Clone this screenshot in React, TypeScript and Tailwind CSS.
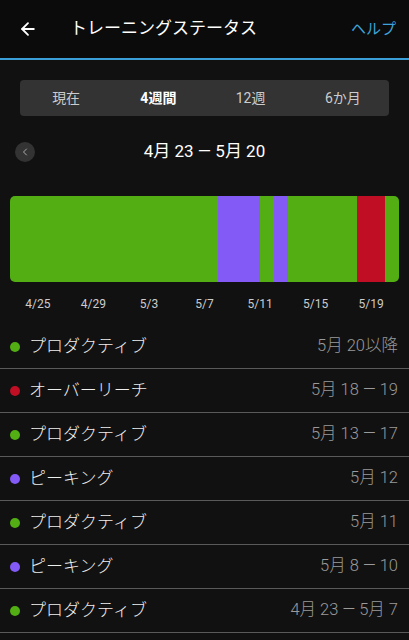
import { ArrowLeft, ChevronLeft } from "lucide-react"

const GREEN = "bg-[#52ae12]"
const PURPLE = "bg-[#845af7]"
const RED = "bg-[#c00f25]"

// one segment per status run, width by number of days
const segments = [
  { days: "flex-[15]", color: GREEN },
  { days: "flex-[3]", color: PURPLE },
  { days: "flex-[1]", color: GREEN },
  { days: "flex-[1]", color: PURPLE },
  { days: "flex-[5]", color: GREEN },
  { days: "flex-[2]", color: RED },
  { days: "flex-[1]", color: GREEN },
]

const ticks = ["4/25", "4/29", "5/3", "5/7", "5/11", "5/15", "5/19"]

const rows = [
  { label: "プロダクティブ", color: GREEN, range: "5月 20以降" },
  { label: "オーバーリーチ", color: RED, range: "5月 18 — 19" },
  { label: "プロダクティブ", color: GREEN, range: "5月 13 — 17" },
  { label: "ピーキング", color: PURPLE, range: "5月 12" },
  { label: "プロダクティブ", color: GREEN, range: "5月 11" },
  { label: "ピーキング", color: PURPLE, range: "5月 8 — 10" },
  { label: "プロダクティブ", color: GREEN, range: "4月 23 — 5月 7" },
]

const tabs = ["現在", "4週間", "12週", "6か月"]

export default function App() {
  return (
    <div
      className="w-[409px] h-[640px] overflow-hidden bg-[#111111] text-white"
      style={{ fontFamily: 'Roboto, "Noto Sans CJK JP", sans-serif' }}
    >
      <header className="h-[58px] bg-[#0b0b0b] flex items-center pl-[18px] pr-[13px]">
        <ArrowLeft size={20} strokeWidth={2.2} className="text-white" />
        <h1 className="ml-[32px] text-[17px] text-white">トレーニングステータス</h1>
        <span className="ml-auto text-[15px] text-[#3ea3dc]">ヘルプ</span>
      </header>
      <div className="h-[2px] bg-[#3a9fd6]" />

      <div className="mx-[20px] mt-[20px] h-[36px] rounded-[4px] bg-[#333333] grid grid-cols-4 items-center text-[14px]">
        {tabs.map((t, i) => (
          <div key={t} className={`text-center ${i === 1 ? "text-white font-bold" : "text-[#cccccc]"}`}>
            {t}
          </div>
        ))}
      </div>

      <div className="relative mt-[20px] h-[32px] flex items-center justify-center">
        <div className="absolute left-[15px] top-[6px] w-[20px] h-[20px] rounded-full bg-[#333333] flex items-center justify-center">
          <ChevronLeft size={12} strokeWidth={2} className="text-[#aaaaaa]" />
        </div>
        <span className="text-[17px] text-white">4月 23 — 5月 20</span>
      </div>

      <div className="mx-[10px] mt-[28px]">
        <div className="flex h-[86px] rounded-[5px] overflow-hidden">
          {segments.map((s, i) => (
            <div key={i} className={`${s.days} ${s.color}`} />
          ))}
        </div>
        <div className="grid grid-cols-7 mt-[13px] text-[12px] text-[#cccccc]">
          {ticks.map((t) => (
            <div key={t} className="text-center">
              {t}
            </div>
          ))}
        </div>
      </div>

      <ul className="mt-[12px]">
        {rows.map((r, i) => (
          <li key={i} className="h-[44px] flex items-center pl-[10px] pr-[11px] border-b-[1.5px] border-[#5a5a5a]">
            <span className={`w-[10px] h-[10px] rounded-full ${r.color}`} />
            <span className="ml-[9px] text-[17px] font-light text-[#eeeeee]">{r.label}</span>
            <span className="ml-auto text-[16.5px] font-light text-[#9a9a9a]">{r.range}</span>
          </li>
        ))}
      </ul>
    </div>
  )
}
